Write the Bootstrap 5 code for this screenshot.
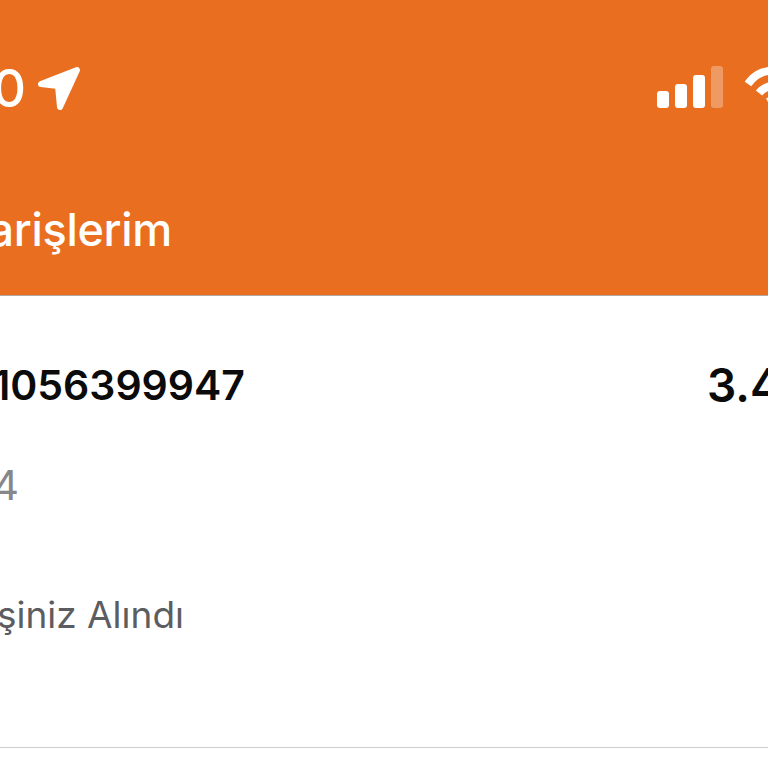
<!DOCTYPE html>
<html lang="tr">

<head>
    <meta charset="UTF-8">
    <meta name="viewport" content="width=device-width, initial-scale=1.0">
    <title>Siparişlerim</title>
    <link href="https://cdn.jsdelivr.net/npm/bootstrap@5.3.0/dist/css/bootstrap.min.css" rel="stylesheet">
    <style>
        body {
            font-family: Inter, "Liberation Sans", sans-serif;
            background: #fff;
            overflow: hidden;
        }

        .order-head {
            height: 296px;
            background: #e96e20;
            border-bottom: 1px solid #b0a9a3;
            color: #fff;
        }

        .status-row {
            height: 66px;
            margin-top: 66px;
        }

        .clock-box {
            width: 26px;
            font-size: 52px;
            line-height: 46px;
            font-weight: 500;
        }

        .signal-bars {
            gap: 6px;
            height: 42px;
        }

        .signal-bars span {
            width: 12px;
            background: #fff;
            border-radius: 3px;
        }

        .bar-1 { height: 17px; }
        .bar-2 { height: 24px; }
        .bar-3 { height: 33px; }
        .signal-bars .bar-4 { height: 42px; background: rgba(255, 255, 255, .3); }

        .title-box {
            width: 172px;
            margin-top: 70px;
            font-size: 45px;
            line-height: 56px;
            font-weight: 500;
            letter-spacing: -.3px;
        }

        .order-row {
            height: 452px;
            border-bottom: 1px solid #cfcfcf;
            padding-top: 64px;
        }

        .order-no {
            font-size: 41px;
            line-height: 50px;
            font-weight: 600;
            color: #0b0b0b;
        }

        .order-sum {
            font-size: 46px;
            line-height: 50px;
            font-weight: 600;
            color: #0b0b0b;
        }

        .order-date {
            width: 19px;
            margin-top: 52px;
            font-size: 41px;
            line-height: 46px;
            color: #85878a;
        }

        .order-state {
            width: 184px;
            margin-top: 84px;
            font-size: 37px;
            line-height: 46px;
            color: #5c5d60;
        }

        .cut-left {
            display: flex;
            justify-content: flex-end;
            overflow: hidden;
            white-space: nowrap;
        }
    </style>
</head>

<body class="m-0">
    <div class="order-head d-flex flex-column">
        <div class="status-row d-flex justify-content-between">
            <div class="d-flex align-items-start">
                <div class="clock-box cut-left">10</div>
                <svg style="margin-left:11px" width="44" height="45" viewBox="0 0 44 45">
                    <path d="M4 18 40 4 23 41 21 20Z" fill="#fff" stroke="#fff" stroke-width="6" stroke-linejoin="round"/>
                </svg>
            </div>
            <div class="d-flex align-items-start">
                <div class="signal-bars d-flex align-items-end">
                    <span class="bar-1"></span>
                    <span class="bar-2"></span>
                    <span class="bar-3"></span>
                    <span class="bar-4"></span>
                </div>
                <svg style="margin-left:22px" width="23" height="44" viewBox="0 0 23 44" fill="none" stroke="#fff" stroke-width="8">
                    <path d="M3 18C10 8 18 5 30 4"/>
                    <path d="M14 27C18 22 23 20 30 19"/>
                    <path d="M23 36 30 32"/>
                </svg>
            </div>
        </div>
        <div class="title-box cut-left">Siparişlerim</div>
    </div>

    <div class="order-row">
        <div class="d-flex justify-content-between">
            <div class="order-no cut-left" style="width:245px">1056399947</div>
            <div class="order-sum overflow-hidden text-nowrap" style="width:61px">3.450</div>
        </div>
        <div class="order-date cut-left">2024</div>
        <div class="order-state cut-left">Siparişiniz Alındı</div>
    </div>

    <script src="https://cdn.jsdelivr.net/npm/bootstrap@5.3.0/dist/js/bootstrap.bundle.min.js"></script>
</body>

</html>
